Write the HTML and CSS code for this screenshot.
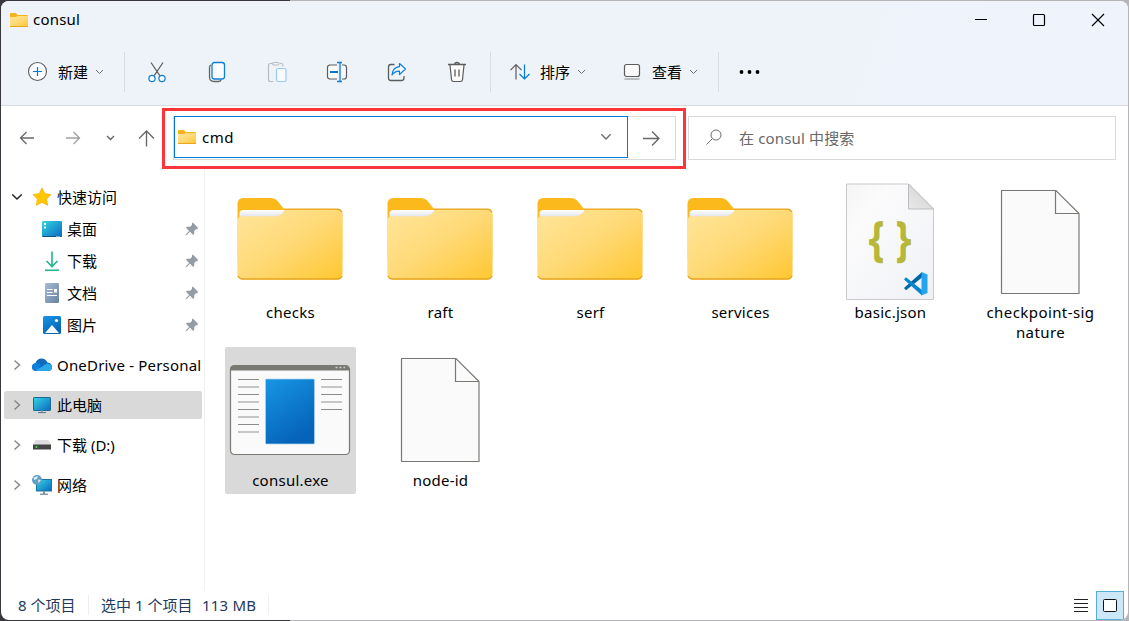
FILE: index.html
```html
<!DOCTYPE html>
<html lang="zh-CN">
<head>
<meta charset="utf-8">
<title>consul</title>
<link rel="stylesheet" href="styles.css">
</head>
<body>
<svg class="defs" aria-hidden="true">
  <defs>
    <linearGradient id="gold" x1="0" y1="0" x2="1" y2="1"><stop offset="0" stop-color="#ffe69b"/><stop offset=".5" stop-color="#ffd976"/><stop offset="1" stop-color="#ffc730"/></linearGradient>
    <linearGradient id="paper" x1="0" y1="0" x2="0" y2="1"><stop offset="0" stop-color="#fff"/><stop offset="1" stop-color="#dfe3ea"/></linearGradient>
    <linearGradient id="blue" x1="0" y1="0" x2=".5" y2="1"><stop offset="0" stop-color="#1896e4"/><stop offset="1" stop-color="#0563b9"/></linearGradient>
    <linearGradient id="screen" x1="0" y1="0" x2="1" y2="1"><stop offset="0" stop-color="#33d6e4"/><stop offset="1" stop-color="#0b68c0"/></linearGradient>
    <linearGradient id="sheet" x1="0" y1="0" x2="1" y2="1"><stop offset="0" stop-color="#f5f5f6"/><stop offset=".25" stop-color="#fbfbfc"/><stop offset="1" stop-color="#eff1f5"/></linearGradient>
    <linearGradient id="fold" x1="0" y1="1" x2="1" y2="0"><stop offset="0" stop-color="#e9e9e9"/><stop offset="1" stop-color="#cfcfcf"/></linearGradient>
    <linearGradient id="slate" x1="0" y1="0" x2="1" y2="1"><stop offset="0" stop-color="#a9bdd4"/><stop offset="1" stop-color="#66819f"/></linearGradient>
    <symbol id="folder-small" viewBox="0 0 18 14">
      <path d="M0 1Q0 0 1 0h5l1.5 2H17q1 0 1 1v10H0z" fill="#f6b31c"/>
      <path d="M0 4h6l1.5-1H18v10.3H0z" fill="url(#gold)"/><path d="M0 13.5h18" stroke="#e9a51c"/>
    </symbol>
    <symbol id="folder-large" viewBox="0 0 131 124">
      <path d="M12.500 25q0-6 6-6H45c5 0 7 2 10 6l4 5h53q5.500 0 5.500 5.500V80H12.500z" fill="#fcb91b"/>
      <path d="M14.500 38V35q0-4 4-4H60l-4 7z" fill="url(#paper)"/>
      <path d="M12.500 42q0-4.500 4.500-4.500H49c4 0 6-1 8-3l1.500-1.500q1.500-2 4-2H112q5.500 0 5.500 5.500V95q0 5.500-5.500 5.500H18q-5.500 0-5.500-5.500z" fill="url(#gold)" stroke="#ffe09a" stroke-width=".6"/>
      <path d="M58.500 30.200H112q3.500 0 5 3M13 97q1.500 3 5 3h94q3.500 0 5-3" fill="none" stroke="#e9a621" stroke-width="1.300"/>
    </symbol>
    <symbol id="blank" viewBox="0 0 131 124">
      <path d="M26.500 11.500H81L104 34.500v80H26.500z" fill="#fafafa" stroke="#797974" stroke-width="1.200"/><path d="M80.500 11.500v23H104" fill="none" stroke="#797974" stroke-width="1.200"/>
    </symbol>
    <symbol id="pin" viewBox="0 0 14 14"><path d="M7.800.6 13.200 6 12 7.200H10.900L9.200 9v3L8.300 12.900 5 9.700 1.600 13 .4 13.500.8 12.200 4.200 8.900 1 5.600 2 4.700H5.200L6.900 3V1.600z" fill="#929ca4"/></symbol>
    <symbol id="right" viewBox="0 0 8 12"><path d="m1.500 1.500 5 4.500-5 4.500" fill="none" stroke="#858585" stroke-width="1.400"/></symbol>
    <symbol id="down" viewBox="0 0 9 6"><path d="m1 1 3.500 3.500L8 1" fill="none" stroke="#6b6b6b" stroke-width="1"/></symbol>
  </defs>
</svg>
<div class="window">
  <header class="header">
    <div class="titlebar">
      <svg class="title-icon" viewBox="0 0 18 14"><use href="#folder-small"/></svg><span class="title">consul</span>
      <div class="controls">
        <svg viewBox="0 0 14 14"><path d="M2 6.500h12" stroke="#000"/></svg>
        <svg viewBox="0 0 14 14"><rect x="1.500" y="1.500" width="11" height="11" rx="1" fill="none" stroke="#000" stroke-width="1.200"/></svg>
        <svg viewBox="0 0 14 14"><path d="m1 1 12 12M13 1 1 13" stroke="#000" stroke-width="1.200"/></svg>
      </div>
    </div>
    <div class="toolbar">
      <div class="command new">
        <svg class="icon" viewBox="0 0 24 24"><circle cx="12.500" cy="11.500" r="9" fill="#fafcff" stroke="#5c5c5c" stroke-width="1.100"/><path d="M8 11.500h9M12.500 7v9" stroke="#0078d4" stroke-width="1.200"/></svg>
        <span>新建</span><svg class="chevron" viewBox="0 0 9 6"><use href="#down"/></svg>
      </div>
      <div class="tools">
        <svg class="icon" viewBox="0 0 24 24"><path d="m6 2.500 8.800 13.200M18 2.500 9.200 15.700" stroke="#5c5c5c" stroke-width="1.200"/><g fill="#fafcff" stroke="#0d7fd8" stroke-width="1.200"><circle cx="7" cy="18.500" r="3.100"/><circle cx="17" cy="18.500" r="3.100"/></g></svg>
        <svg class="icon" viewBox="0 0 24 24"><path d="M6 5q-1.500.5-1.500 2.500V17q0 4.500 4.500 4.500h4.500q2 0 2.500-1.500" fill="none" stroke="#666" stroke-width="1.300"/><rect x="7" y="2.500" width="12.500" height="16.500" rx="2.500" fill="#fafcff" stroke="#0d7fd8" stroke-width="1.300"/></svg>
        <svg class="icon" viewBox="0 0 24 24"><path d="M8.500 21.500H5.500q-2 0-2-2v-14q0-2 2-2h2M15 3.500h1.500q1.500 0 1.500 2V6.500" fill="none" stroke="#b9bcbf" stroke-width="1.200"/><rect x="7.500" y="2.500" width="6.500" height="2.500" rx="1.200" fill="none" stroke="#b9bcbf" stroke-width="1.100"/><rect x="11.500" y="8.500" width="9.500" height="13" rx="1.500" fill="#f7faff" stroke="#9ccbef" stroke-width="1.200"/></svg>
        <svg class="icon" viewBox="0 0 24 24"><path d="M12 19H5q-2.500 0-2.500-2.500v-9Q2.500 5 5 5h7M17 5h2q2.500 0 2.500 2.500v9q0 2.500-2.500 2.500h-2" fill="#fafcff" stroke="#5c5c5c" stroke-width="1.200"/><path d="M5 12h8" stroke="#0078d4" stroke-width="2"/><path d="M12 2.500h5M12 21.500h5M15 2.500v19" fill="none" stroke="#0d7fd8" stroke-width="1.300"/></svg>
        <svg class="icon" viewBox="0 0 24 24"><path d="M9.500 4.500H6Q3.500 4.500 3.500 7v11Q3.500 20.500 6 20.500h10.500q2.500 0 2.500-2.500V16" fill="none" stroke="#5c5c5c" stroke-width="1.300"/><path d="M14.500 3.500 20.500 9l-6 5.500v-3.300c-3.500-.2-5.500 1-7.500 3.800.5-5 3-8 7.500-8.300z" fill="#fafcff" stroke="#0d7fd8" stroke-width="1.200" stroke-linejoin="round"/></svg>
        <svg class="icon" viewBox="0 0 24 24"><path d="m5 5 1.500 14.500q.2 2 2 2h7q1.800 0 2-2L19 5" fill="#fafafa" stroke="#5c5c5c" stroke-width="1.200"/><path d="M3 4.500h18M9.500 4.500q.3-2 2.500-2t2.500 2M10 9.500v7M14 9.500v7" fill="none" stroke="#5c5c5c" stroke-width="1.300"/></svg>
      </div>
      <div class="command sort">
        <svg class="icon" viewBox="0 0 24 24"><path d="M8 19.500V5M2.500 10.200 8 4.700l5.500 5.500" fill="none" stroke="#5c5c5c" stroke-width="1.200"/><path d="M16.500 4.500V19M11.500 14l5 5 5-5" fill="none" stroke="#0078d4" stroke-width="1.200"/></svg>
        <span>排序</span><svg class="chevron" viewBox="0 0 9 6"><use href="#down"/></svg>
      </div>
      <div class="command view">
        <svg class="icon" viewBox="0 0 24 24"><rect x="4.500" y="4.500" width="15" height="12" rx="2" fill="#fafafa" stroke="#5c5c5c" stroke-width="1.200"/><path d="M4.500 19h15" stroke="#858585" stroke-width="1.200"/></svg>
        <span>查看</span><svg class="chevron" viewBox="0 0 9 6"><use href="#down"/></svg>
      </div>
      <svg class="more" viewBox="0 0 20 4"><circle cx="2" cy="2" r="1.900"/><circle cx="10" cy="2" r="1.900"/><circle cx="18" cy="2" r="1.900"/></svg>
    </div>
  </header>
  <div class="navigation">
    <div class="arrows">
      <svg viewBox="0 0 16 16"><path d="M15 8H1.500M7.500 2l-6 6 6 6" fill="none" stroke="#686868" stroke-width="1.300"/></svg>
      <svg viewBox="0 0 16 16"><path d="M1 8h13.500M8.500 2l6 6-6 6" fill="none" stroke="#a0a0a0" stroke-width="1.300"/></svg>
      <svg class="recent" viewBox="0 0 9 6"><path d="m1 1 3.500 3.500L8 1" fill="none" stroke="#606060" stroke-width="1.300"/></svg>
      <svg class="up" viewBox="0 0 16 16"><path d="M8 15.500V1M1 8l7-7 7 7" fill="none" stroke="#686868" stroke-width="1.300"/></svg>
    </div>
    <div class="highlight">
      <div class="address">
        <div class="field"><svg class="title-icon" viewBox="0 0 18 14"><use href="#folder-small"/></svg><span>cmd</span><svg class="drop" viewBox="0 0 9 6"><use href="#down"/></svg></div>
        <div class="go"><svg viewBox="0 0 16 16"><path d="M0 8h15M8.500 1.500 15 8l-6.500 6.500" fill="none" stroke="#686868" stroke-width="1.300"/></svg></div>
      </div>
    </div>
    <div class="search"><svg viewBox="0 0 16 16"><circle cx="10" cy="6" r="5" fill="none" stroke="#6e6e6e"/><path d="M6.500 9.500.5 15.500" stroke="#6e6e6e"/></svg><span>在 consul 中搜索</span></div>
  </div>
  <main class="body">
    <nav class="sidebar">
      <div class="quick">
        <div class="row"><svg class="expanded" viewBox="0 0 12 8"><path d="m1.300 1.500 4.700 4.500 4.700-4.500" fill="none" stroke="#222" stroke-width="1.500"/></svg><svg class="glyph" viewBox="0 0 20 20"><path d="m10 1 2.800 5.700 6.200.9-4.500 4.400 1.100 6.200L10 15.300l-5.600 2.900L5.500 12 1 7.600l6.200-.9z" fill="#ffc700" stroke="#ffb90d" stroke-linejoin="round"/></svg><span>快速访问</span></div>
        <div class="row child"><svg class="glyph" viewBox="0 0 20 20"><rect y="2" width="20" height="16" rx="1.300" fill="url(#screen)"/><path d="M2 4h2v2H2zm0 3.500h2v2H2z" fill="#fff"/><path d="M.5 17.500h19" stroke="#174a84"/><path d="M14.500 17.500h4" stroke="#fff" stroke-dasharray="1 1"/></svg><span>桌面</span><svg class="pin"><use href="#pin"/></svg></div>
        <div class="row child"><svg class="glyph" viewBox="0 0 20 20"><path d="M10 .5v14.500M4.500 10 10 15.500l5.500-5.500M3 19.200h14" fill="none" stroke="#1fb591" stroke-width="1.600"/></svg><span>下载</span><svg class="pin"><use href="#pin"/></svg></div>
        <div class="row child"><svg class="glyph" viewBox="0 0 20 20"><rect x="3" y="0" width="14" height="20" rx="1.300" fill="url(#slate)"/><path d="M5 6.500h5.500M5 9.500h5.500M5 12.500h10" stroke="#fff" stroke-width="1.200"/><path d="M12 6h3v3.500h-3z" fill="#fff"/></svg><span>文档</span><svg class="pin"><use href="#pin"/></svg></div>
        <div class="row child"><svg class="glyph" viewBox="0 0 20 20"><rect x="1" y="1" width="18" height="18" rx="1.500" fill="url(#blue)"/><path d="m3 18 7-8 7 8z" fill="#f4f8fc"/><circle cx="14.500" cy="5.500" r="1.600" fill="#fff"/></svg><span>图片</span><svg class="pin"><use href="#pin"/></svg></div>
      </div>
      <div class="drives">
        <div class="row"><svg class="collapsed"><use href="#right"/></svg><svg class="glyph" viewBox="0 0 20 20"><path d="M4.500 16Q0 16 0 12q0-3 3.500-4Q5 3.500 9.500 3.500q4 0 6 4Q20 8 20 12q0 4-4 4z" fill="#0f6cbd"/><path d="M5 16Q0 16 0 12q0-3.500 4-4 2.500-.5 5 1.500z" fill="#0a80dc"/><path d="M4 15.500 13 9.500q2-1.500 4-.5 3 .8 3 3.300 0 3.700-4 3.700H5z" fill="#29a8ee"/></svg><span class="onedrive">OneDrive - Personal</span></div>
        <div class="row selected"><svg class="collapsed"><use href="#right"/></svg><svg class="glyph" viewBox="0 0 20 20"><rect x="1.500" y="2.500" width="17" height="13" rx=".6" fill="url(#screen)" stroke="#176a92"/><path d="M9 15.500h2v2H9z" fill="#9aa7b1"/><path d="M6 17.600h8" stroke="#56718a"/></svg><span>此电脑</span></div>
        <div class="row"><svg class="collapsed"><use href="#right"/></svg><svg class="glyph" viewBox="0 0 20 20"><path d="m1 10 2.500-5h13l2.500 5z" fill="#dedede"/><rect x="1" y="9.500" width="18" height="5" fill="#454545"/><circle cx="4.500" cy="12" r="1" fill="#4be060"/></svg><span>下载 (D:)</span></div>
        <div class="row"><svg class="collapsed"><use href="#right"/></svg><svg class="glyph" viewBox="0 0 20 20"><rect x="4.500" y="4.500" width="15" height="11.500" fill="url(#screen)" stroke="#1874a5"/><circle cx="5" cy="5" r="5" fill="#5f9fc4"/><path d="M1.500 2.500 6 1l-1 3-3 1zm4.500 2 3 .5-2.500 3z" fill="#d9eef5"/><path d="M12 16v3" stroke="#89949f" stroke-width="2"/><path d="M8 19.200h8" stroke="#526f86"/></svg><span>网络</span></div>
      </div>
    </nav>
    <section class="files">
      <div class="file"><svg class="art"><use href="#folder-large"/></svg><span>checks</span></div>
      <div class="file"><svg class="art"><use href="#folder-large"/></svg><span>raft</span></div>
      <div class="file"><svg class="art"><use href="#folder-large"/></svg><span>serf</span></div>
      <div class="file"><svg class="art"><use href="#folder-large"/></svg><span>services</span></div>
      <div class="file"><svg class="art" viewBox="0 0 131 124"><path d="M21.500 5H83.500L108.500 30V120.500H21.500z" fill="url(#sheet)" stroke="#c9c9cb"/><path d="M83.500 5v25h25z" fill="url(#fold)" stroke="#bdbdbd"/><text x="43.500" y="76.500" class="brace" textLength="16" lengthAdjust="spacingAndGlyphs">{</text><text x="70.500" y="76.500" class="brace" textLength="16" lengthAdjust="spacingAndGlyphs">}</text><path d="m79 109 2 2.200 16-12.700V93z" fill="#0065a9"/><path d="m79 100.500 2-2.200 16 12.700v5.500z" fill="#0785cf"/><path d="m96.500 93 6 2.500v18.500l-6 2.500z" fill="#25a5ef"/></svg><span>basic.json</span></div>
      <div class="file"><svg class="art"><use href="#blank"/></svg><span class="long">checkpoint-sig<br>nature</span></div>
      <div class="file selected"><svg class="art" viewBox="0 0 131 124"><rect x="5.500" y="18.500" width="119" height="89" rx="4" fill="#fafafa" stroke="#797974" stroke-width="1.200"/><path d="M5 23.500q0-5 4-5h111.500q4 0 4 5z" fill="#797974"/><path d="M110.500 20.500h9.500" stroke="#ccc" stroke-width="1.500" stroke-dasharray="2 2"/><rect x="40.500" y="32" width="49" height="65" rx="1" fill="url(#blue)" stroke="#a9d4f3" stroke-width=".7"/><path d="M13 32.500h21M13 47.500h21M13 62.500h21M13 77.500h21M96 32.500h21M96 47.500h21M96 62.500h21" stroke="#8b8b8b"/><path d="M13 40h21M13 55h21M13 70h21M13 85h21M96 40h21M96 55h21" stroke="#c6c6c6" stroke-width="1.800"/></svg><span>consul.exe</span></div>
      <div class="file"><svg class="art"><use href="#blank"/></svg><span>node-id</span></div>
    </section>
  </main>
  <footer class="status">
    <span class="count">8 个项目</span><span class="selection">选中 1 个项目</span><span class="size">113 MB</span>
    <div class="modes"><svg class="list" viewBox="0 0 14 14"><path d="M0 1.500h14M0 5.500h14M0 9.500h14M0 13.500h14" stroke="#222"/></svg><div class="active"><svg viewBox="0 0 14 14"><rect x=".5" y="1.500" width="13" height="12" rx="1" fill="#fff" stroke="#111"/></svg></div></div>
  </footer>
</div>
</body>
</html>
```
FILE: styles.css
```css
* { box-sizing: border-box; }
html, body { width: 1129px; height: 621px; overflow: hidden; }
body { margin: 0; padding: 1px; background: linear-gradient(90deg, #37373d 290px, #b5b5b7 290px); font: 15px/20px "Noto Sans", "Noto Sans CJK SC", sans-serif; color: #000; }
svg { display: block; flex: none; }
.defs { position: absolute; width: 0; height: 0; }
.window { width: 1127px; height: 619px; border-radius: 8px; overflow: hidden; background: #fff; display: flex; flex-direction: column; }
.header { height: 105px; background: linear-gradient(110deg, #edf3f8 60%, #eff3fc 85%); border-bottom: 1px solid #d8dce1; }
.titlebar { height: 38px; padding-left: 9px; display: flex; align-items: center; }
.title-icon { width: 18px; height: 14px; margin-top: -1px; }
.title { margin: -2px 0 0 5px; letter-spacing: .2px; }
.controls { display: flex; gap: 45px; margin: -1px 23px 0 auto; }
.controls svg { width: 14px; height: 14px; }
.toolbar { height: 66px; display: flex; align-items: center; }
.icon { width: 24px; height: 24px; }
.command { display: flex; align-items: center; height: 40px; }
.command span { margin-left: 8px; width: 30px; white-space: nowrap; }
.chevron { width: 9px; height: 6px; margin-left: 7px; }
.new { width: 124px; padding-left: 24px; border-right: 1px solid #d9dde2; }
.new span { margin-left: 9px; }
.tools { display: flex; gap: 36px; padding-left: 20px; width: 366px; height: 40px; align-items: center; border-right: 1px solid #d9dde2; }
.sort { width: 112px; padding-left: 17px; }
.view { width: 116px; padding-left: 17px; border-right: 1px solid #d9dde2; }
.more { width: 21px; height: 4px; margin-left: 20px; }
.navigation { height: 63px; display: flex; flex: none; align-items: flex-start; padding-top: 2px; }
.arrows { width: 161px; height: 60px; display: flex; align-items: center; padding-left: 18px; }
.arrows svg { width: 16px; height: 16px; }
.arrows svg + svg { margin-left: 30px; }
.arrows .recent { width: 9px; height: 6px; margin: -1px 0 0 25px; }
.arrows .up { margin-left: 23px; width: 17px; height: 17px; }
.highlight { width: 524px; height: 61px; border: 3px solid #fb3539; padding: 5px 8px; }
.address { width: 503px; height: 44px; border: 1px solid #d9d9d9; display: flex; }
.field { width: 454px; height: 42px; margin-top: -1px; border: 1px solid #0078d4; display: flex; align-items: center; padding-left: 3px; }
.field span { margin: 0 0 1px 6px; letter-spacing: .5px; }
.drop { width: 12px; height: 8px; margin: 0 15px 0 auto; }
.go { width: 47px; display: flex; align-items: center; justify-content: center; }
.go svg { width: 17px; height: 17px; }
.search { width: 428px; height: 44px; margin: 8px 0 0 2px; border: 1px solid #d9d9d9; display: flex; align-items: center; padding-left: 17px; color: #686868; }
.search svg { width: 16px; height: 16px; margin: -2px 17px 0 0; }
.search span { letter-spacing: .15px; }
.body { height: 421px; flex: none; display: flex; }
.sidebar { width: 204px; border-right: 1px solid #f0f0f0; padding: 12px 0 0 3px; }
.quick .row { height: 32px; }
.row { width: 198px; height: 28px; padding-left: 7px; display: flex; align-items: center; white-space: nowrap; border-radius: 2px; }
.glyph { width: 20px; height: 20px; margin-right: 5px; }
.expanded { width: 12px; height: 8px; margin-right: 9px; }
.collapsed { width: 8px; height: 12px; margin: 0 11px 0 2px; }
.row.child { padding-left: 38px; }
.onedrive { letter-spacing: .19px; }
.pin { width: 14px; height: 14px; margin: 0 3px 0 auto; }
.drives { display: flex; flex-direction: column; gap: 12px; margin-top: 10px; }
.selected { background: #d9d9d9; }
.files { padding: 10px 0 0 20px; display: grid; grid-template-columns: repeat(6, 131px); grid-auto-rows: 147px; gap: 21px 19px; align-content: start; }
.file { height: 147px; text-align: center; border-radius: 2px; }
.file span { display: block; white-space: nowrap; margin-top: -1px; letter-spacing: .25px; }
.file .long { letter-spacing: .42px; }
.art { width: 131px; height: 124px; }
.brace { font: bold 49px "Noto Sans", sans-serif; fill: #b7b73b; }
.status { height: 30px; display: flex; align-items: center; color: #1e395b; padding-left: 17px; }
.count { width: 71px; border-right: 1px solid #eee; white-space: nowrap; }
.selection { margin-left: 12px; width: 101px; white-space: nowrap; }
.size { width: 67px; border-right: 1px solid #eee; letter-spacing: .2px; }
.modes { display: flex; align-items: center; margin: 0 4px 0 auto; gap: 8px; }
.modes svg { width: 14px; height: 14px; }
.active { width: 28px; height: 29px; background: #cce8f8; border: 1px solid #53add6; display: flex; align-items: center; justify-content: center; }
```
